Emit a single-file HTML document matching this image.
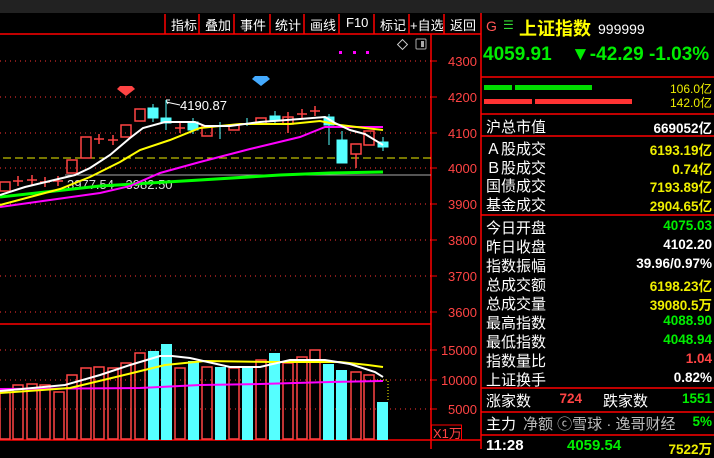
<!DOCTYPE html><html><head><meta charset="utf-8"><style>
body{margin:0;width:714px;height:449px;background:#000;overflow:hidden;font-family:"Liberation Sans","Noto Sans CJK SC",sans-serif;position:relative}
.a{position:absolute;white-space:nowrap}
.r{position:absolute;left:483px;width:231px;height:19px;font-size:15px;color:#fff}
.r .l{position:absolute;left:3px;top:0}
.r .v{position:absolute;right:2px;top:1px;font-weight:bold;font-size:13.5px}
</style></head><body>
<div class="a" style="left:0;top:0;width:714px;height:13px;background:#222"></div>
<svg class="a" style="left:0;top:0" width="714" height="449">
<g stroke="#f00" stroke-width="1.5">
<line x1="0" y1="34" x2="481" y2="34"/>
<line x1="431" y1="34" x2="431" y2="449"/>
<line x1="0" y1="324" x2="431" y2="324"/>
<line x1="0" y1="440" x2="481" y2="440"/>
<line x1="481" y1="13" x2="481" y2="449"/>
<line x1="165" y1="14" x2="165" y2="34"/><line x1="199" y1="14" x2="199" y2="34"/><line x1="234" y1="14" x2="234" y2="34"/><line x1="270" y1="14" x2="270" y2="34"/><line x1="304" y1="14" x2="304" y2="34"/><line x1="339" y1="14" x2="339" y2="34"/><line x1="374" y1="14" x2="374" y2="34"/><line x1="409" y1="14" x2="409" y2="34"/><line x1="444" y1="14" x2="444" y2="34"/>
</g>
<g stroke="#f00" stroke-width="1">
<line x1="431" y1="61" x2="437" y2="61"/><line x1="431" y1="97" x2="437" y2="97"/><line x1="431" y1="133" x2="437" y2="133"/><line x1="431" y1="168" x2="437" y2="168"/><line x1="431" y1="204" x2="437" y2="204"/><line x1="431" y1="240" x2="437" y2="240"/><line x1="431" y1="276" x2="437" y2="276"/><line x1="431" y1="312" x2="437" y2="312"/>
<line x1="431" y1="350" x2="437" y2="350"/><line x1="431" y1="380" x2="437" y2="380"/><line x1="431" y1="409" x2="437" y2="409"/>
</g>
<g stroke="#f33" stroke-width="1" stroke-dasharray="1,4">
<line x1="0" y1="61" x2="431" y2="61"/><line x1="0" y1="97" x2="431" y2="97"/><line x1="0" y1="133" x2="431" y2="133"/><line x1="0" y1="168" x2="431" y2="168"/><line x1="0" y1="204" x2="431" y2="204"/><line x1="0" y1="240" x2="431" y2="240"/><line x1="0" y1="276" x2="431" y2="276"/><line x1="0" y1="312" x2="431" y2="312"/>
<line x1="0" y1="350" x2="431" y2="350"/><line x1="0" y1="380" x2="431" y2="380"/><line x1="0" y1="409" x2="431" y2="409"/>
</g>
<g fill="#f44" font-size="13" font-family="Liberation Sans">
<text x="448" y="66">4300</text><text x="448" y="102">4200</text><text x="448" y="138">4100</text><text x="448" y="173">4000</text><text x="448" y="209">3900</text><text x="448" y="245">3800</text><text x="448" y="281">3700</text><text x="448" y="317">3600</text>
<text x="441" y="355">15000</text><text x="441" y="385">10000</text><text x="448" y="414">5000</text>
</g>
<rect x="431.5" y="425" width="30" height="15" fill="none" stroke="#f00"/>
<text x="433" y="438" fill="#f44" font-size="13" font-family="Liberation Sans,Noto Sans CJK SC">X1万</text>
<line x1="3" y1="158" x2="431" y2="158" stroke="#ee0" stroke-dasharray="8,4"/>
<line x1="65" y1="175" x2="431" y2="175" stroke="#aaa"/>
<rect x="399" y="41" width="7" height="7" transform="rotate(45 402.5 44.5)" fill="none" stroke="#ccc"/>
<rect x="416" y="39" width="10" height="10" fill="none" stroke="#aaa" rx="1"/><rect x="421" y="41" width="3" height="6" fill="#aaa"/>
<g fill="#f0f"><rect x="339" y="51" width="3" height="3"/><rect x="353" y="51" width="3" height="3"/><rect x="366" y="51" width="3" height="3"/></g>
<path d="M120 86h12l3 3-9 7-9-7z" fill="#f44"/><path d="M255 76h12l3 3-9 7-9-7z" fill="#4af"/>
<path d="M168 104l-2-4 M166 100h4 M166 102l14 3" stroke="#fff" fill="none"/>
<text x="180" y="110" fill="#fff" font-size="13">4190.87</text>
<text x="67" y="189" fill="#ddd" font-size="13">3977.54 - 3982.50</text>
<g fill="none" stroke="#f44" stroke-width="1.5">
<rect x="0" y="182" width="10" height="9"/><rect x="67" y="160" width="10" height="13"/><rect x="81" y="137" width="10" height="21"/><rect x="121" y="125" width="10" height="12"/><rect x="135" y="109" width="10" height="12"/><rect x="202" y="126" width="10" height="10"/><rect x="229" y="125" width="10" height="5"/><rect x="256" y="118" width="10" height="6"/><rect x="283" y="117" width="10" height="7"/><rect x="351" y="144" width="10" height="10"/><rect x="364" y="131" width="10" height="14"/>
<path d="M13 181h10M18 176v10M27 180h10M32 175v10M40 182h10M45 177v10M53 181h10M58 176v10M94 139h10M99 134v10M108 140h10M113 135v10M175 128h10M180 123v10M297 114h10M302 109v10M310 111h10M315 106v10M356 154v14M288 112v21"/>
</g>
<g fill="#5ff" stroke="#5ff">
<rect x="148" y="108" width="10" height="10"/><line x1="153" y1="104" x2="153" y2="122"/>
<rect x="161" y="118" width="10" height="5"/><line x1="166" y1="100" x2="166" y2="130"/>
<rect x="188" y="122" width="10" height="8"/><line x1="193" y1="118" x2="193" y2="134"/>
<line x1="220" y1="122" x2="220" y2="139"/><line x1="247" y1="118" x2="247" y2="126"/>
<rect x="270" y="116" width="10" height="5"/><line x1="275" y1="111" x2="275" y2="123"/>
<rect x="324" y="117" width="10" height="8"/><line x1="329" y1="114" x2="329" y2="145"/>
<rect x="337" y="140" width="10" height="23"/><line x1="342" y1="131" x2="342" y2="163"/>
<rect x="378" y="142" width="10" height="5"/><line x1="383" y1="137" x2="383" y2="151"/>
</g>
<g fill="none" stroke-width="2">
<polyline stroke="#0f0" stroke-width="3" points="0,197 100,186 200,180 280,175 330,173 383,172"/>
<polyline stroke="#f0f" points="0,207 50,200 100,193 130,186 160,173 200,162 250,149 300,137 325,127 345,127 383,127"/>
<polyline stroke="#ff0" points="0,205 30,197 60,189 90,177 120,162 140,150 170,140 200,128 240,124 290,124 320,121 340,125 365,128 383,130"/>
<polyline stroke="#fff" points="0,195 25,187 50,181 75,175 90,168 110,155 130,138 143,128 165,122 195,122 205,126 230,126 260,122 300,119 325,117 335,123 350,130 365,134 383,145"/>
</g>
<g fill="none" stroke="#f44" stroke-width="1.5">
<rect x="0" y="392" width="10" height="47"/><rect x="13" y="385" width="10" height="54"/><rect x="27" y="384" width="10" height="55"/><rect x="40" y="385" width="10" height="54"/><rect x="54" y="392" width="10" height="47"/><rect x="67" y="375" width="10" height="64"/><rect x="81" y="368" width="10" height="71"/><rect x="94" y="367" width="10" height="72"/><rect x="108" y="368" width="10" height="71"/><rect x="121" y="363" width="10" height="76"/><rect x="135" y="353" width="10" height="86"/><rect x="175" y="368" width="10" height="71"/><rect x="202" y="367" width="10" height="72"/><rect x="229" y="368" width="10" height="71"/><rect x="256" y="360" width="10" height="79"/><rect x="283" y="363" width="10" height="76"/><rect x="297" y="357" width="10" height="82"/><rect x="310" y="350" width="10" height="89"/><rect x="351" y="372" width="10" height="67"/><rect x="364" y="375" width="10" height="64"/>
</g>
<g fill="#5ff">
<rect x="148" y="351" width="11" height="89"/><rect x="161" y="344" width="11" height="96"/><rect x="188" y="361" width="11" height="79"/><rect x="215" y="367" width="11" height="73"/><rect x="242" y="367" width="11" height="73"/><rect x="269" y="353" width="11" height="87"/><rect x="323" y="364" width="11" height="76"/><rect x="336" y="370" width="11" height="70"/><rect x="377" y="402" width="11" height="38"/>
</g>
<path d="M377 380h11v22" stroke="#ff0" stroke-dasharray="1,2" fill="none"/>
<g fill="none" stroke-width="2">
<polyline stroke="#f0f" points="0,389 140,388 200,385 260,384 330,382 383,381"/>
<polyline stroke="#ff0" points="0,393 70,388 120,376 165,365 205,361 275,362 340,362 368,365 383,367"/>
<polyline stroke="#fff" points="0,391 65,385 100,375 130,365 160,356 172,356 190,358 230,367 260,367 290,360 325,360 350,364 375,372 383,377"/>
</g>
<g stroke="#f00" stroke-width="1.5">
<line x1="481" y1="77" x2="714" y2="77"/><line x1="481" y1="114" x2="714" y2="114"/><line x1="481" y1="136" x2="714" y2="136"/><line x1="481" y1="215" x2="714" y2="215"/><line x1="481" y1="388" x2="714" y2="388"/><line x1="481" y1="412" x2="714" y2="412"/><line x1="481" y1="435" x2="714" y2="435"/>
</g>
<rect x="484" y="85" width="28" height="5" fill="#0d0"/><rect x="515" y="85" width="77" height="5" fill="#0d0"/>
<rect x="484" y="99" width="48" height="5" fill="#f33"/><rect x="535" y="99" width="97" height="5" fill="#f33"/>
</svg>
<div class="a" style="left:165px;top:15px;width:316px;font-size:13px;color:#fff">
<span class="a" style="left:6px">指标</span><span class="a" style="left:40px">叠加</span><span class="a" style="left:75px">事件</span><span class="a" style="left:110px">统计</span><span class="a" style="left:145px">画线</span><span class="a" style="left:181px">F10</span><span class="a" style="left:215px">标记</span><span class="a" style="left:245px">+自选</span><span class="a" style="left:285px">返回</span></div>
<div class="a" style="left:486px;top:18px;font-size:14px;color:#f55">G</div>
<div class="a" style="left:503px;top:18px;font-size:12px;color:#3d3">☰</div>
<div class="a" style="left:519px;top:15px;font-size:18px;color:#ff0;font-weight:bold">上证指数</div>
<div class="a" style="left:598px;top:21px;font-size:14px;color:#fff">999999</div>
<div class="a" style="left:483px;top:44px;font-size:19px;color:#0e0;font-weight:bold">4059.91</div>
<div class="a" style="left:571px;top:44px;font-size:19px;color:#0e0;font-weight:bold">▼-42.29 -1.03%</div>
<div class="a" style="right:2px;top:80px;font-size:12px;color:#ee0">106.0亿</div>
<div class="a" style="right:2px;top:94px;font-size:12px;color:#ee0">142.0亿</div>
<div class="r" style="top:116px"><span class="l">沪总市值</span><span class="v" style="color:#fff">669052亿</span></div>
<div class="r" style="top:138px"><span class="l">Ａ股成交</span><span class="v" style="color:#ee0">6193.19亿</span></div>
<div class="r" style="top:157px"><span class="l">Ｂ股成交</span><span class="v" style="color:#ee0">0.74亿</span></div>
<div class="r" style="top:175px"><span class="l">国债成交</span><span class="v" style="color:#ee0">7193.89亿</span></div>
<div class="r" style="top:194px"><span class="l">基金成交</span><span class="v" style="color:#ee0">2904.65亿</span></div>
<div class="r" style="top:217px"><span class="l">今日开盘</span><span class="v" style="color:#0e0">4075.03</span></div>
<div class="r" style="top:236px"><span class="l">昨日收盘</span><span class="v" style="color:#fff">4102.20</span></div>
<div class="r" style="top:255px"><span class="l">指数振幅</span><span class="v" style="color:#fff">39.96/0.97%</span></div>
<div class="r" style="top:274px"><span class="l">总成交额</span><span class="v" style="color:#ee0">6198.23亿</span></div>
<div class="r" style="top:293px"><span class="l">总成交量</span><span class="v" style="color:#ee0">39080.5万</span></div>
<div class="r" style="top:312px"><span class="l">最高指数</span><span class="v" style="color:#0e0">4088.90</span></div>
<div class="r" style="top:331px"><span class="l">最低指数</span><span class="v" style="color:#0e0">4048.94</span></div>
<div class="r" style="top:350px"><span class="l">指数量比</span><span class="v" style="color:#f44">1.04</span></div>
<div class="r" style="top:369px"><span class="l">上证换手</span><span class="v" style="color:#fff">0.82%</span></div>
<div class="r" style="top:390px"><span class="l">涨家数</span><span class="v" style="right:132px;color:#f44">724</span><span class="a" style="left:120px">跌家数</span><span class="v" style="color:#0e0">1551</span></div>
<div class="r" style="top:413px"><span class="l">主力</span><span class="a" style="left:40px;color:#bbb">净额 ⓒ雪球 · 逸哥财经</span><span class="v" style="color:#0e0">5%</span></div>
<div class="r" style="top:437px"><span class="l" style="font-weight:bold">11:28</span><span class="a" style="left:84px;color:#0e0;font-weight:bold">4059.54</span><span class="v" style="color:#ee0">7522万</span></div>
</body></html>
